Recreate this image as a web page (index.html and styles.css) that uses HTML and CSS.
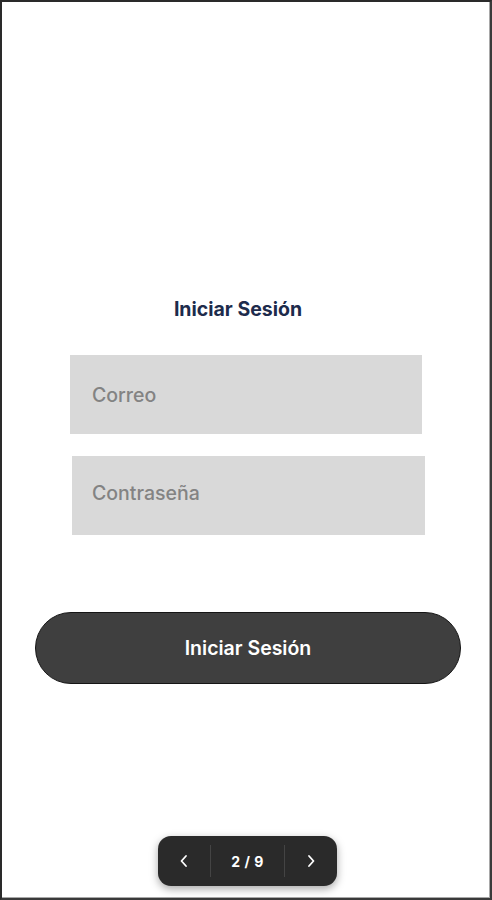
FILE: index.html
```html
<html>
<head>
    <title>Iniciar Sesión</title>
    <meta charset="UTF-8" name="viewport" content="width=device-width, initial-scale=1">
    <link rel="stylesheet" href="styles.css">
</head>

<body>
    <div class="frame">
        <h1 class="titulo">Iniciar Sesión</h1>
        <div class="campos">
            <input class="campo correo" type="text" placeholder="Correo">
            <input class="campo clave" type="password" placeholder="Contraseña">
        </div>
        <button class="entrar">Iniciar Sesión</button>

        <div class="pager">
            <span class="flecha">
                <svg width="12" height="14" viewBox="0 0 12 14"><path d="M8 2 L3.5 7 L8 12" fill="none" stroke="#fff" stroke-width="1.8" stroke-linecap="round" stroke-linejoin="round"/></svg>
            </span>
            <span class="sep"></span>
            <span class="num">2 / 9</span>
            <span class="sep"></span>
            <span class="flecha">
                <svg width="12" height="14" viewBox="0 0 12 14"><path d="M4 2 L8.5 7 L4 12" fill="none" stroke="#fff" stroke-width="1.8" stroke-linecap="round" stroke-linejoin="round"/></svg>
            </span>
        </div>
    </div>
</body>
</html>
```

FILE: styles.css
```css
html, body {
    margin: 0;
    padding: 0;
    font-family: Inter, "Noto Sans", sans-serif;
    background-color: white;
}

.frame {
    position: relative;
    box-sizing: border-box;
    width: 492px;
    height: 900px;
    border-top: 2px solid #2a2a2a;
    border-left: 2px solid #2a2a2a;
    border-right: 2px solid #3a3a3a;
    border-bottom: 2px solid #3a3a3a;
    box-shadow: inset -1px -1px 0 #a8a8a8;
    padding-top: 295px;
    display: flex;
    flex-direction: column;
}

.titulo {
    margin: 0;
    font-size: 19.5px;
    line-height: 24px;
    font-weight: 700;
    color: #1d2b4c;
    text-align: center;
    padding-right: 16px;
}

.campos {
    display: flex;
    flex-direction: column;
    gap: 22px;
    margin-top: 34px;
}

.campo {
    box-sizing: border-box;
    width: 352px;
    height: 79px;
    border: none;
    outline: none;
    background-color: #d9d9d9;
    padding-left: 22px;
    font-family: Inter, "Noto Sans", sans-serif;
    font-size: 19.5px;
    font-weight: 500;
    color: #555;
}

.campo::placeholder {
    color: #838383;
}

.correo {
    margin-left: 68px;
}

.clave {
    width: 353px;
    margin-left: 70px;
    padding-left: 20px;
    padding-top: 0;
    padding-bottom: 6px;
}

.entrar {
    box-sizing: border-box;
    width: 426px;
    height: 72px;
    margin-top: 77px;
    margin-left: 33px;
    border: 1px solid #151515;
    border-radius: 36px;
    background-color: #3f3f3f;
    color: white;
    font-family: Inter, "Noto Sans", sans-serif;
    font-size: 19.5px;
    font-weight: 600;
    cursor: pointer;
}

.pager {
    position: absolute;
    left: 156px;
    bottom: 12px;
    width: 179px;
    height: 50px;
    box-sizing: border-box;
    border-radius: 13px;
    background-color: #2a2a2a;
    box-shadow: 0 3px 8px rgba(0, 0, 0, 0.35);
    display: flex;
    align-items: center;
    color: white;
}

.flecha {
    width: 52px;
    display: flex;
    justify-content: center;
    align-items: center;
}

.sep {
    width: 1px;
    height: 32px;
    background-color: #444;
}

.num {
    flex: 1;
    text-align: center;
    font-size: 14px;
    font-weight: 700;
    letter-spacing: 0.5px;
}
```
